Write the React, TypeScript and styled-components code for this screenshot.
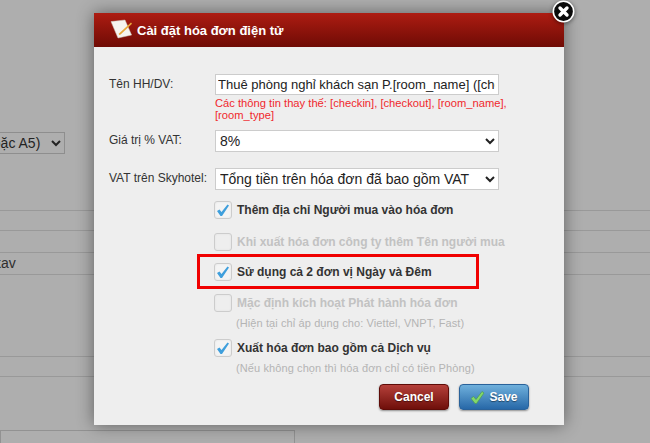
import styled, { createGlobalStyle } from "styled-components";

const Global = createGlobalStyle`
    html, body {
        margin: 0;
        padding: 0;
        background: #f9f9f9;
    }
    body {
        font-family: "Liberation Sans", Arial, sans-serif;
    }
`;

const Page = styled.div`
    position: relative;
    width: 650px;
    height: 443px;
    overflow: hidden;
    padding-top: 132px;
    box-sizing: border-box;
    background: #f9f9f9;
`;

const BackSelect = styled.select`
    display: block;
    width: 169px;
    height: 22px;
    margin-left: -104px;
    border: 1px solid #ccc;
    background: #f9f9f9;
    color: #333;
    font: 14px "Liberation Sans", Arial, sans-serif;
    padding: 0;
`;

const BackRows = styled.div<{ $top: number }>`
    margin-top: ${(p) => p.$top}px;
`;

const BackRow = styled.div<{ $h: number }>`
    height: ${(p) => p.$h}px;
    box-sizing: border-box;
    border-top: 1px solid #dcdcdc;
    font-size: 14px;
    line-height: 20px;
    color: #444;
    margin-left: -6px;
`;

const BackInput = styled.div`
    width: 295px;
    height: 40px;
    margin-top: 53px;
    box-sizing: border-box;
    border: 1px solid #d2d2d2;
`;

const Overlay = styled.div`
    position: absolute;
    inset: 0;
    background: rgba(0, 0, 0, 0.3);
`;

const Modal = styled.div`
    position: absolute;
    left: 94px;
    top: 13px;
    width: 470px;
    height: 412px;
    background: #eee;
    box-shadow: 0 0 16px rgba(0, 0, 0, 0.45);
`;

const Header = styled.div`
    display: flex;
    align-items: center;
    gap: 3px;
    height: 34px;
    padding-left: 16px;
    background: linear-gradient(#ad1c12, #6f0b05);
    color: #fff;
    font-size: 13px;
    font-weight: bold;
`;

const CloseButton = styled.div`
    position: absolute;
    right: -11px;
    top: -13px;
    width: 23px;
    height: 23px;
    filter: drop-shadow(0 1px 2px rgba(0, 0, 0, 0.5));
`;

const Body = styled.div`
    padding: 27px 0 0 15px;
`;

const FieldRow = styled.div<{ $after: number }>`
    display: flex;
    margin-bottom: ${(p) => p.$after}px;
`;

const Label = styled.div`
    width: 106px;
    flex: none;
    font-size: 12px;
    line-height: 15px;
    padding-top: 3px;
    color: #333;
`;

const TextInput = styled.input`
    display: block;
    width: 284px;
    height: 21px;
    box-sizing: border-box;
    border: 1px solid #ccc;
    background: #fff;
    padding: 0 3px 0 2px;
    color: #222;
    font: 13px "Liberation Sans", Arial, sans-serif;
    outline: none;
`;

const Hint = styled.div`
    width: 300px;
    margin-top: 2px;
    color: #f0282d;
    font-size: 11.2px;
    line-height: 12px;
`;

const Select = styled.select`
    display: block;
    width: 284px;
    height: 22px;
    box-sizing: border-box;
    border: 1px solid #ccc;
    background: #fff;
    padding: 0;
    color: #222;
    font: 14px "Liberation Sans", Arial, sans-serif;
`;

const Options = styled.div`
    padding-left: 105px;
`;

const CheckRow = styled.div<{ $off?: boolean; $after: number }>`
    display: flex;
    align-items: center;
    gap: 5px;
    height: 18px;
    margin-bottom: ${(p) => p.$after}px;
    font-size: 12px;
    font-weight: bold;
    color: ${(p) => (p.$off ? "#c2c2c2" : "#333")};
`;

const Box = styled.div<{ $off?: boolean }>`
    flex: none;
    width: 16px;
    height: 16px;
    display: flex;
    align-items: center;
    justify-content: center;
    border: 1px solid #ccc;
    border-radius: 3px;
    background: ${(p) => (p.$off ? "#eee" : "#f4f4f4")};
    box-shadow: inset 0 0 2px #e0e0e0;
`;

const SubNote = styled.div<{ $before: number; $after: number }>`
    margin: ${(p) => p.$before}px 0 ${(p) => p.$after}px 22px;
    height: 12px;
    font-size: 11px;
    line-height: 12px;
    letter-spacing: 0.1px;
    color: #b4b4b4;
`;

const Actions = styled.div`
    display: flex;
    justify-content: flex-end;
    gap: 10px;
    margin-top: 10px;
    padding-right: 35px;
`;

const Button = styled.div<{ $tone: "red" | "blue" }>`
    width: 70px;
    height: 26px;
    box-sizing: border-box;
    display: flex;
    align-items: center;
    justify-content: center;
    gap: 4px;
    border-radius: 4px;
    border: 1px solid ${(p) => (p.$tone === "red" ? "#5e0c08" : "#2a629a")};
    background: ${(p) =>
        p.$tone === "red"
            ? "linear-gradient(#b5403a, #6f0f0a)"
            : "linear-gradient(#6fb0dc, #2768a8)"};
    box-shadow: 0 1px 2px rgba(0, 0, 0, 0.4);
    color: #fff;
    font-size: 12px;
    font-weight: bold;
    text-shadow: 0 1px 1px rgba(0, 0, 0, 0.45);
`;

const Annotation = styled.div`
    position: absolute;
    left: 197px;
    top: 254px;
    width: 282px;
    height: 35px;
    box-sizing: border-box;
    border: 3px solid #f00000;
`;

const Tick = () => (
    <svg width="14" height="14" viewBox="0 0 14 14">
        <path d="M1 8 L3.5 6.5 L5.5 9 L11.5 1.5 L13 2.5 L6 13 L4.5 13 Z" fill="#3f9fdc" />
    </svg>
);

const NoteIcon = () => (
    <svg width="24" height="24" viewBox="0 0 24 24">
        <path d="M1 3.6 L15 2 L21.6 17 L8 20 Z" fill="#f6f5f0" stroke="#cfcbbf" strokeWidth="0.5" />
        <path d="M9.3 15.3 L21 4.6 L22 5.7 L10.6 16.6 L8.8 16.9 Z" fill="#e8a93c" />
    </svg>
);

const CloseIcon = () => (
    <svg width="23" height="23" viewBox="0 0 23 23">
        <circle cx="11.5" cy="11.5" r="10.2" fill="#0a0a0a" stroke="#fff" strokeWidth="1.6" />
        <path d="M8 8 L15 15 M15 8 L8 15" stroke="#fff" strokeWidth="3.4" strokeLinecap="round" />
    </svg>
);

const SaveTick = () => (
    <svg width="15" height="15" viewBox="0 0 15 15">
        <path
            d="M1 8.5 L3.5 6.5 L6 9.5 L12 1.5 L14 3 L6.5 13.5 L5 13.5 Z"
            fill="#83d86a"
            stroke="#4a9a55"
            strokeWidth="0.7"
        />
    </svg>
);

export default function App() {
    return (
        <Page>
            <Global />
            <BackSelect defaultValue="a">
                <option value="a">Khổ giấy (A4 hoặc A5)</option>
            </BackSelect>
            <BackRows $top={56}>
                <BackRow $h={20} />
                <BackRow $h={22} />
                <BackRow $h={22}>kav</BackRow>
                <BackRow $h={82} />
                <BackRow $h={20} />
                <BackRow $h={0} />
            </BackRows>
            <BackInput />
            <Overlay />
            <Modal>
                <Header>
                    <NoteIcon />
                    Cài đặt hóa đơn điện tử
                </Header>
                <CloseButton>
                    <CloseIcon />
                </CloseButton>
                <Body>
                    <FieldRow $after={9}>
                        <Label>Tên HH/DV:</Label>
                        <div>
                            <TextInput readOnly value="Thuê phòng nghỉ khách sạn P.[room_name] ([checkin] - [checkout])" />
                            <Hint>Các thông tin thay thế: [checkin], [checkout], [room_name], [room_type]</Hint>
                        </div>
                    </FieldRow>
                    <FieldRow $after={16}>
                        <Label>Giá trị % VAT:</Label>
                        <Select defaultValue="8">
                            <option value="8">8%</option>
                        </Select>
                    </FieldRow>
                    <FieldRow $after={11}>
                        <Label>VAT trên Skyhotel:</Label>
                        <Select defaultValue="a">
                            <option value="a">Tổng tiền trên hóa đơn đã bao gồm VAT</option>
                        </Select>
                    </FieldRow>
                    <Options>
                        <CheckRow $after={14}>
                            <Box><Tick /></Box>
                            Thêm địa chỉ Người mua vào hóa đơn
                        </CheckRow>
                        <CheckRow $off $after={12}>
                            <Box $off />
                            Khi xuất hóa đơn công ty thêm Tên người mua
                        </CheckRow>
                        <CheckRow $after={13}>
                            <Box><Tick /></Box>
                            Sử dụng cả 2 đơn vị Ngày và Đêm
                        </CheckRow>
                        <CheckRow $off $after={0}>
                            <Box $off />
                            Mặc định kích hoạt Phát hành hóa đơn
                        </CheckRow>
                        <SubNote $before={5} $after={10}>(Hiện tại chỉ áp dụng cho: Viettel, VNPT, Fast)</SubNote>
                        <CheckRow $after={0}>
                            <Box><Tick /></Box>
                            Xuất hóa đơn bao gồm cả Dịch vụ
                        </CheckRow>
                        <SubNote $before={5} $after={0}>(Nếu không chọn thì hóa đơn chỉ có tiền Phòng)</SubNote>
                    </Options>
                    <Actions>
                        <Button $tone="red">Cancel</Button>
                        <Button $tone="blue">
                            <SaveTick />
                            Save
                        </Button>
                    </Actions>
                </Body>
            </Modal>
            <Annotation />
        </Page>
    );
}
